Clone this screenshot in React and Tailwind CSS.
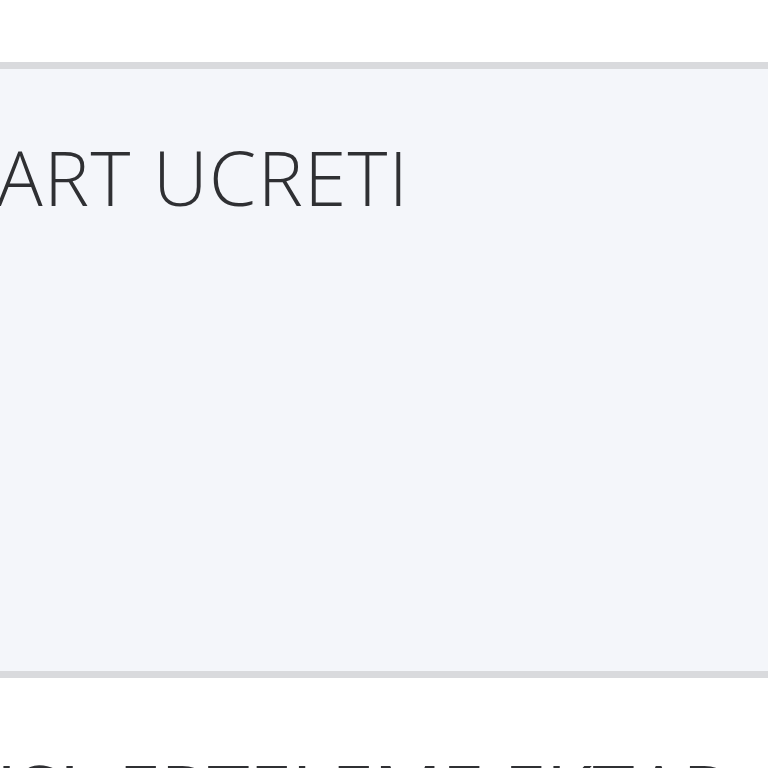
export default function App() {
  return (
    <div className="w-[768px] h-[768px] overflow-hidden bg-white" style={{ fontFamily: '"Open Sans", "Noto Sans", sans-serif' }}>
      <div className="h-[62px] bg-white" />
      <div className="h-[616px] bg-[#f4f6fa] border-t-[7px] border-b-[7px] border-[#d9dadd]">
        <div className="pt-[70px] -ml-[3px] text-[76px] leading-none font-[350] text-[#2f3033] whitespace-nowrap tracking-[1.4px]">
          ART UCRETI
        </div>
      </div>
      <div className="pt-[76px] -ml-[4px] text-[76px] leading-none font-medium text-[#2f3033] whitespace-nowrap">
        ISL ERTELEME EKTAR
      </div>
    </div>
  );
}
